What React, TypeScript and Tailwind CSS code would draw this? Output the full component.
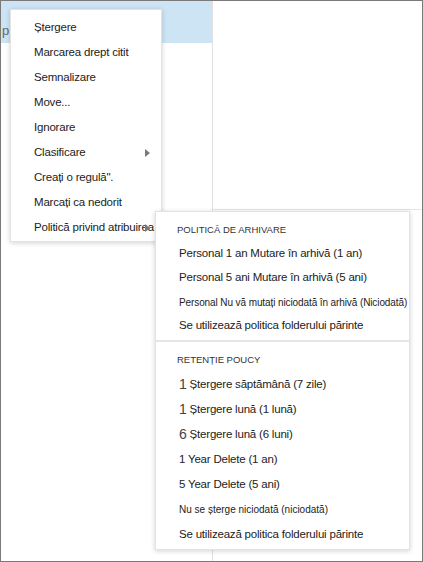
import React from "react";

const mainItems = [
  "Ștergere",
  "Marcarea drept citit",
  "Semnalizare",
  "Move...",
  "Ignorare",
  "Clasificare",
  "Creați o regulă\".",
  "Marcați ca nedorit",
  "Politică privind atribuirea",
];

function Arrow() {
  return (
    <svg width="5" height="8" viewBox="0 0 5 8" className="absolute right-[11px] top-[9px]">
      <path d="M0 0 L5 4 L0 8 Z" fill="#7a7a7a" />
    </svg>
  );
}

export default function App() {
  return (
    <div
      className="relative w-[423px] h-[562px] border border-[#7a7a7a] bg-white flex overflow-hidden"
      style={{ fontFamily: "'Liberation Sans', Arial, sans-serif" }}
    >
      {/* left pane */}
      <div className="w-[212px] border-r border-[#e1e1e1] shrink-0">
        <div className="h-[42px] bg-[#cde4f5] text-[13px] text-[#666] pl-[1px] pt-[20px]">p</div>
      </div>

      {/* right pane */}
      <div className="flex-1">
        <div className="h-[209px] border-b border-[#e6e6e6]" />
      </div>

      {/* context menu */}
      <div className="absolute left-[9px] top-[8px] w-[152px] bg-white border border-[#e3e3e3] shadow-[0_1px_5px_rgba(0,0,0,0.18)] pt-[5px] pb-[1px] text-[11.5px] tracking-[-0.2px] text-[#222]">
        {mainItems.map((item, i) => (
          <div key={i} className="relative h-[25px] flex items-center pl-[23px] whitespace-nowrap">
            {item}
            {(i === 5 || i === 8) && <Arrow />}
          </div>
        ))}
      </div>

      {/* submenu */}
      <div className="absolute left-[154px] top-[210px] w-[255px] bg-white border border-[#e3e3e3] shadow-[0_1px_5px_rgba(0,0,0,0.18)] pt-[6px] pb-[2px] text-[11.5px] tracking-[-0.2px] text-[#222]">
        <div className="h-[24px] flex items-center pl-[21px] text-[9.5px] tracking-normal text-[#333]">POLITICĂ DE ARHIVARE</div>
        <div className="h-[24px] flex items-center pl-[23px] whitespace-nowrap">Personal 1 an Mutare în arhivă (1 an)</div>
        <div className="h-[24px] flex items-center pl-[23px] whitespace-nowrap">Personal 5 ani Mutare în arhivă (5 ani)</div>
        <div className="h-[24px] flex items-center pl-[23px] whitespace-nowrap text-[10px] tracking-[-0.1px]">Personal Nu vă mutați niciodată în arhivă (Niciodată)</div>
        <div className="h-[24px] flex items-center pl-[23px] whitespace-nowrap">Se utilizează politica folderului părinte</div>
        <div className="mt-[2px] h-[2px] bg-[#e6e6e6]" />
        <div className="mt-[6px] h-[24px] flex items-center pl-[21px] text-[9.5px] tracking-normal text-[#333]">RETENȚIE POUCY</div>
        <div className="h-[25px] flex items-center pl-[23px] whitespace-nowrap">
          <span className="text-[14px] mr-[3px] text-[#444]">1</span>Ștergere săptămână (7 zile)
        </div>
        <div className="h-[25px] flex items-center pl-[23px] whitespace-nowrap">
          <span className="text-[14px] mr-[3px] text-[#444]">1</span>Ștergere lună (1 lună)
        </div>
        <div className="h-[25px] flex items-center pl-[23px] whitespace-nowrap">
          <span className="text-[14px] mr-[3px] text-[#444]">6</span>Ștergere lună (6 luni)
        </div>
        <div className="h-[25px] flex items-center pl-[23px] whitespace-nowrap">1 Year Delete (1 an)</div>
        <div className="h-[25px] flex items-center pl-[23px] whitespace-nowrap">5 Year Delete (5 ani)</div>
        <div className="h-[25px] flex items-center pl-[23px] whitespace-nowrap text-[10px] tracking-normal">Nu se șterge niciodată (niciodată)</div>
        <div className="h-[25px] flex items-center pl-[23px] whitespace-nowrap">Se utilizează politica folderului părinte</div>
      </div>
    </div>
  );
}
